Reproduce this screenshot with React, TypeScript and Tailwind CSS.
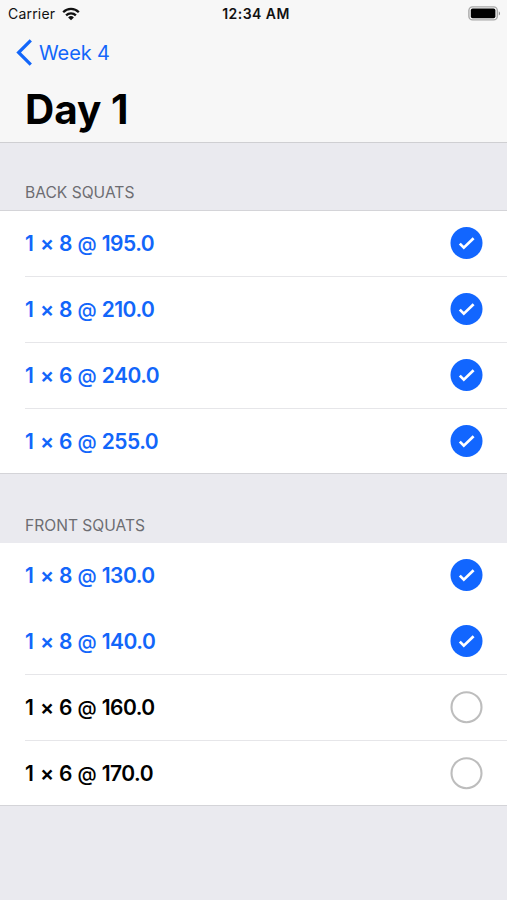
import clsx from "clsx";

type WorkoutSet = {
  count: number;
  reps: number;
  weight: string;
  done: boolean;
};

type Exercise = {
  name: string;
  sets: WorkoutSet[];
};

const exercises: Exercise[] = [
  {
    name: "Back Squats",
    sets: [
      { count: 1, reps: 8, weight: "195.0", done: true },
      { count: 1, reps: 8, weight: "210.0", done: true },
      { count: 1, reps: 6, weight: "240.0", done: true },
      { count: 1, reps: 6, weight: "255.0", done: true },
    ],
  },
  {
    name: "Front Squats",
    sets: [
      { count: 1, reps: 8, weight: "130.0", done: true },
      { count: 1, reps: 8, weight: "140.0", done: true },
      { count: 1, reps: 6, weight: "160.0", done: false },
      { count: 1, reps: 6, weight: "170.0", done: false },
    ],
  },
];

function StatusBar() {
  return (
    <div className="grid h-[27px] grid-cols-3 items-center pr-[6px] pl-2 text-[#111111]">
      <div className="flex items-center gap-[7px]">
        <span className="text-[14px] tracking-[0.2px]">Carrier</span>
        <svg width="18" height="14" viewBox="0 0 18 14" fill="none" stroke="currentColor" strokeWidth="2.3">
          <path d="M1.2 5.2a11 11 0 0 1 15.6 0" />
          <path d="M4.1 8.4a6.9 6.9 0 0 1 9.8 0" />
          <path d="M9 13.2 6.1 10.4a4.1 4.1 0 0 1 5.8 0z" fill="currentColor" stroke="none" />
        </svg>
      </div>
      <span className="pl-[3px] text-center text-[14px] font-semibold tracking-[0.45px] whitespace-nowrap">
        12:34 AM
      </span>
      <svg className="justify-self-end" width="33" height="15" viewBox="0 0 33 15">
        <rect x="0.9" y="0.9" width="28.4" height="13" rx="3.6" fill="#f7f7f7" stroke="#a8a8a8" strokeWidth="1.4" />
        <rect x="2.8" y="2.6" width="24.6" height="9.6" rx="1.8" fill="#000000" />
        <path d="M30.8 5.2v4.4c1.7-.7 1.7-3.7 0-4.4z" fill="#8e8e8e" />
      </svg>
    </div>
  );
}

function CheckCircle({ done }: { done: boolean }) {
  return (
    <svg width="34" height="34" viewBox="0 0 34 34" fill="none">
      {done ? (
        <>
          <circle cx="17.5" cy="17" r="16" fill="#1266ff" />
          <path d="m10.8 17.6 4 4 9.8-9.4" stroke="#ffffff" strokeWidth="2.7" />
        </>
      ) : (
        <circle cx="17.5" cy="17.2" r="15" stroke="#bdbdbd" strokeWidth="2.1" />
      )}
    </svg>
  );
}

function SetRow({ set, last, separator }: { set: WorkoutSet; last: boolean; separator: boolean }) {
  return (
    <li className={clsx("pl-[25px]", last ? "h-16" : "h-[66px]")}>
      <div
        className={clsx(
          "flex h-full items-start justify-between border-b pt-[15px] pr-6",
          separator ? "border-[#e6e6e9]" : "border-transparent",
        )}
      >
        <span
          className={clsx(
            "flex items-baseline text-[21px] leading-[36px] font-semibold",
            set.done ? "text-[#1266fa]" : "text-black",
          )}
        >
          <span>{set.count}</span>
          <span className="ml-[6px]">×</span>
          <span className="ml-[5px]">{set.reps}</span>
          <span className="ml-[5px] text-[19.5px] font-medium">@</span>
          <span className="ml-[5px] tracking-[-0.5px]">{set.weight}</span>
        </span>
        <CheckCircle done={set.done} />
      </div>
    </li>
  );
}

export default function App() {
  return (
    <div className="min-h-[900px] w-full bg-[#eaeaef] font-['Inter','Liberation_Sans',sans-serif]">
      <header className="h-[143px] border-b border-[#cfcfd2] bg-[#f7f7f7]">
        <StatusBar />
        <button type="button" className="flex h-[51px] items-center gap-[7px] pl-4 text-[#1266fa]">
          <svg width="16" height="27" viewBox="0 0 16 27" fill="none" stroke="currentColor" strokeWidth="3.2">
            <path d="M14.8 1.3 2.6 13.5l12.2 12.2" />
          </svg>
          <span className="text-[20px] tracking-[-0.1px]">Week 4</span>
        </button>
        <h1 className="pl-[25px] text-[40.5px] leading-[64px] font-bold">Day 1</h1>
      </header>

      {exercises.map((exercise, index) => (
        <section key={exercise.name}>
          <h2
            className={clsx(
              "flex items-end pb-[6px] pl-[25px] text-[15.6px] text-[#6d6d72] uppercase",
              index === 0 ? "h-[67px]" : "h-[69px]",
            )}
          >
            {exercise.name}
          </h2>
          <ul className={clsx("border-[#d4d4d8] bg-white", index === 0 ? "border-y" : "border-b")}>
            {exercise.sets.map((set, i) => {
              const last = i === exercise.sets.length - 1;
              // The second group opens without a line under its first set.
              return <SetRow key={i} set={set} last={last} separator={!last && !(index === 1 && i === 0)} />;
            })}
          </ul>
        </section>
      ))}
    </div>
  );
}
